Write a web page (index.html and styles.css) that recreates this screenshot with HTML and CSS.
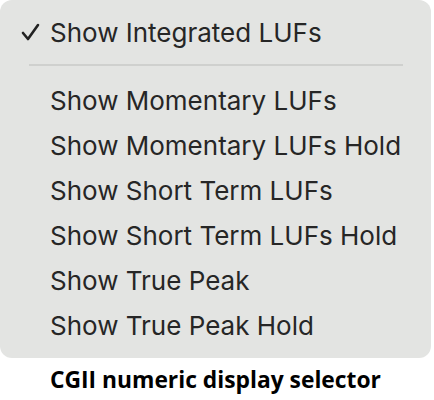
FILE: index.html
```html
<!DOCTYPE html>
<html>
<head><link rel="stylesheet" href="styles.css"></head>
<body>
<div class="menu">
  <div class="item checked"><span class="check"><svg width="19" height="18" viewBox="0 0 19 18"><path d="M2 10 L7 16 L17 2" fill="none" stroke="#222" stroke-width="2.6" stroke-linecap="round" stroke-linejoin="round"/></svg></span><span>Show Integrated LUFs</span></div>
  <div class="sep"></div>
  <div class="item"><span class="check"></span><span>Show Momentary LUFs</span></div>
  <div class="item"><span class="check"></span><span>Show Momentary LUFs Hold</span></div>
  <div class="item"><span class="check"></span><span>Show Short Term LUFs</span></div>
  <div class="item"><span class="check"></span><span>Show Short Term LUFs Hold</span></div>
  <div class="item"><span class="check"></span><span>Show True Peak</span></div>
  <div class="item"><span class="check"></span><span>Show True Peak Hold</span></div>
</div>
<div class="caption">CGII numeric display selector</div>
</body>
</html>
```
FILE: styles.css
```css
html, body { margin: 0; padding: 0; background: #fff; }
body { width: 434px; height: 400px; overflow: hidden; font-family: Inter, "Noto Sans", sans-serif; }
.menu {
  width: 431px; height: 358px; box-sizing: border-box;
  background: #e3e4e2; border-radius: 12px;
  padding: 10px 0 0 0;
}
.item { display: flex; align-items: center; height: 45px; font-size: 26px; color: #262626; padding-left: 21px; }
.checked { height: 44px; margin-bottom: 10px; }
.check { width: 29px; display: flex; align-items: center; }
.sep { height: 2px; background: #cfd0ce; margin: 0 28px 12px 29px; }
.caption { font-family: "Open Sans", sans-serif; font-weight: 700; font-size: 22.8px; color: #000; padding-left: 50px; margin-top: 6px; }
```
